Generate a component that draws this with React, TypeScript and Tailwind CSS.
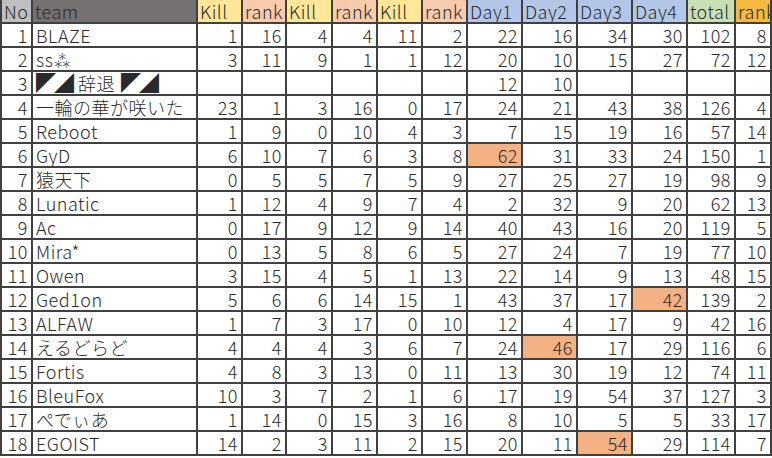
const headers = [
  { t: 'No', bg: 'bg-[#bfbfbf]' },
  { t: 'team', bg: 'bg-[#767171]' },
  { t: 'Kill', bg: 'bg-[#ffe699]' },
  { t: 'rank', bg: 'bg-[#f8cbad]' },
  { t: 'Kill', bg: 'bg-[#ffe699]' },
  { t: 'rank', bg: 'bg-[#f8cbad]' },
  { t: 'Kill', bg: 'bg-[#ffe699]' },
  { t: 'rank', bg: 'bg-[#f8cbad]' },
  { t: 'Day1', bg: 'bg-[#b4c6e7]' },
  { t: 'Day2', bg: 'bg-[#b4c6e7]' },
  { t: 'Day3', bg: 'bg-[#b4c6e7]' },
  { t: 'Day4', bg: 'bg-[#b4c6e7]' },
  { t: 'total', bg: 'bg-[#c6e0b4]' },
  { t: 'rank', bg: 'bg-[#f5b841]' },
];

// [no, team, k1, r1, k2, r2, k3, r3, d1, d2, d3, d4, total, rank], hl = highlighted column index
const rows: { v: (string | number)[]; hl?: number }[] = [
  { v: [1, 'BLAZE', 1, 16, 4, 4, 11, 2, 22, 16, 34, 30, 102, 8] },
  { v: [2, 'ss⁂', 3, 11, 9, 1, 1, 12, 20, 10, 15, 27, 72, 12] },
  { v: [3, '', '', '', '', '', '', '', 12, 10, '', '', '', ''] },
  { v: [4, '一輪の華が咲いた', 23, 1, 3, 16, 0, 17, 24, 21, 43, 38, 126, 4] },
  { v: [5, 'Reboot', 1, 9, 0, 10, 4, 3, 7, 15, 19, 16, 57, 14] },
  { v: [6, 'GyD', 6, 10, 7, 6, 3, 8, 62, 31, 33, 24, 150, 1], hl: 8 },
  { v: [7, '猿天下', 0, 5, 5, 7, 5, 9, 27, 25, 27, 19, 98, 9] },
  { v: [8, 'Lunatic', 1, 12, 4, 9, 7, 4, 2, 32, 9, 20, 62, 13] },
  { v: [9, 'Ac', 0, 17, 9, 12, 9, 14, 40, 43, 16, 20, 119, 5] },
  { v: [10, 'Mira*', 0, 13, 5, 8, 6, 5, 27, 24, 7, 19, 77, 10] },
  { v: [11, 'Owen', 3, 15, 4, 5, 1, 13, 22, 14, 9, 13, 48, 15] },
  { v: [12, 'Ged1on', 5, 6, 6, 14, 15, 1, 43, 37, 17, 42, 139, 2], hl: 11 },
  { v: [13, 'ALFAW', 1, 7, 3, 17, 0, 10, 12, 4, 17, 9, 42, 16] },
  { v: [14, 'えるどらど', 4, 4, 4, 3, 6, 7, 24, 46, 17, 29, 116, 6], hl: 9 },
  { v: [15, 'Fortis', 4, 8, 3, 13, 0, 11, 13, 30, 19, 12, 74, 11] },
  { v: [16, 'BleuFox', 10, 3, 7, 2, 1, 6, 17, 19, 54, 37, 127, 3] },
  { v: [17, 'ぺでぃあ', 1, 14, 0, 15, 3, 16, 8, 10, 5, 5, 33, 17] },
  { v: [18, 'EGOIST', 14, 2, 3, 11, 2, 15, 20, 11, 54, 29, 114, 7], hl: 10 },
];

export default function App() {
  return (
    <div className="w-[772px] h-[458px] overflow-hidden bg-white">
      <div
        className="grid w-max gap-[2px] bg-[#404040] p-[2px] pt-0 text-[18px] font-light tracking-[0.5px] leading-[22px] text-[#2a2a2a] grid-cols-[29px_163px_43px_42px_44px_43px_43px_43px_53px_53px_53px_53px_46px_34px] auto-rows-[22px]"
        style={{ fontFamily: '"Noto Sans CJK JP", "Noto Sans", sans-serif' }}
      >
        {headers.map((h, i) => (
          <div key={i} className={`${h.bg} flex items-center pl-[2px] whitespace-nowrap overflow-hidden`}>
            {h.t}
          </div>
        ))}
        {rows.map((r, ri) =>
          r.v.map((c, ci) => (
            <div
              key={`${ri}-${ci}`}
              className={`flex items-center whitespace-nowrap overflow-hidden ${
                ci === 1 ? 'justify-start pl-[3px]' : 'justify-end pr-[3px]'
              } ${r.hl === ci ? 'bg-[#f4b183]' : 'bg-white'}`}
            >
              {ci === 1 && r.v[0] === 3 ? (
                <span className="flex items-center gap-[6px]">
                  <span className="text-[20px] leading-[22px] tracking-[-2px]">◤◢</span>
                  <span>辞退</span>
                  <span className="text-[20px] leading-[22px] tracking-[-2px]">◤◢</span>
                </span>
              ) : (
                c
              )}
            </div>
          ))
        )}
      </div>
    </div>
  );
}
